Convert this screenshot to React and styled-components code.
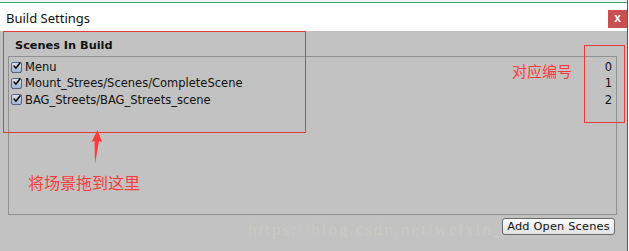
import React from 'react'
import styled, { createGlobalStyle } from 'styled-components'

const Global = createGlobalStyle`
  html, body { margin: 0; padding: 0; background: #ffffff; }
  body { width: 629px; height: 251px; overflow: hidden; }
`

const Window = styled.div`
  position: relative;
  width: 627px;
  height: 251px;
  border-right: 1px solid #4c5a6e;
  display: flex;
  flex-direction: column;
  font-family: 'DejaVu Sans', Verdana, sans-serif;
`

const TopStrip = styled.div`
  height: 2px;
  background: #f4f4f4;
  border-bottom: 1px solid #3da66a;
`

const TitleBar = styled.div`
  height: 28px;
  background: #ffffff;
  display: flex;
  align-items: center;
  justify-content: space-between;
  padding-left: 6px;
`

const Title = styled.span`
  font-family: 'Noto Sans', 'DejaVu Sans', sans-serif;
  font-size: 13px;
  color: #111;
  margin-top: 1px;
`

const CloseButton = styled.div`
  width: 19px;
  height: 18px;
  margin-top: 4px;
  background: #c75050;
  color: #fff;
  font-family: 'Liberation Sans', Arial, sans-serif;
  font-weight: bold;
  font-size: 12px;
  display: flex;
  align-items: center;
  justify-content: center;
  padding-bottom: 2px;
  box-sizing: border-box;
`

const Body = styled.div`
  flex: 1;
  background: #c2c2c2;
  padding: 7px 10px 0 8px;
  display: flex;
  flex-direction: column;
`

const Header = styled.div`
  font-weight: bold;
  font-size: 11.3px;
  color: #111;
  padding-left: 7px;
  height: 18px;
  line-height: 16px;
`

const ListBox = styled.div`
  height: 155px;
  border: 1px solid #909090;
  padding: 2px 2px 0 2px;
  display: flex;
  flex-direction: column;
`

const Row = styled.div`
  height: 16.3px;
  display: flex;
  align-items: center;
  font-size: 11.5px;
  color: #111;
`

const Check = styled.span`
  width: 11px;
  height: 11px;
  box-sizing: border-box;
  border: 1px solid #56657a;
  border-radius: 2px;
  background: linear-gradient(#d6e2f3, #9fb5d4);
  margin-right: 3px;
  display: flex;
  align-items: center;
  justify-content: center;
  flex-shrink: 0;
`

const SceneName = styled.span`
  flex: 1;
`

const Index = styled.span`
  padding-right: 2px;
`

const Footer = styled.div`
  display: flex;
  justify-content: flex-end;
  padding-top: 3px;
  padding-right: 2px;
`

const Button = styled.div`
  height: 17px;
  width: 113px;
  box-sizing: border-box;
  border: 1px solid #6a6a6a;
  border-radius: 3px;
  background: linear-gradient(#fbfbfb, #e2e2e2);
  font-size: 11.3px;
  color: #111;
  display: flex;
  align-items: center;
  justify-content: center;
  letter-spacing: 0.2px;
  position: relative;
  z-index: 2;
`

const Watermark = styled.div`
  position: absolute;
  left: 248px;
  top: 220px;
  font-family: 'Liberation Serif', serif;
  font-size: 17px;
  letter-spacing: 2px;
  color: #cac9c2;
  white-space: nowrap;
  z-index: 1;
`

const RedBox = styled.div`
  position: absolute;
  border: 1px solid #e63b3b;
  left: ${p => p.x}px;
  top: ${p => p.y}px;
  width: ${p => p.w}px;
  height: ${p => p.h}px;
  z-index: 3;
`

const Note = styled.div`
  position: absolute;
  left: ${p => p.x}px;
  top: ${p => p.y}px;
  font-family: 'Noto Sans CJK SC', sans-serif;
  font-size: ${p => p.size}px;
  color: #ff3a3a;
  white-space: nowrap;
  line-height: 1;
  z-index: 3;
`

const Arrow = styled.svg`
  position: absolute;
  left: 85px;
  top: 128px;
  z-index: 3;
`

const CheckMark = () => (
  <svg width="11" height="10" viewBox="0 0 11 10" style={{ marginTop: -2, marginLeft: 1 }}>
    <path d="M1.5 5 L4 8 L9.5 0.8" fill="none" stroke="#0b0b0b" strokeWidth="2.2" strokeLinecap="round" strokeLinejoin="round" />
  </svg>
)

const scenes = [
  'Menu',
  'Mount_Strees/Scenes/CompleteScene',
  'BAG_Streets/BAG_Streets_scene'
]

export default function App() {
  return (
    <>
      <Global />
      <Window>
        <TopStrip />
        <TitleBar>
          <Title>Build Settings</Title>
          <CloseButton>x</CloseButton>
        </TitleBar>
        <Body>
          <Header>Scenes In Build</Header>
          <ListBox>
            {scenes.map((s, i) => (
              <Row key={s}>
                <Check><CheckMark /></Check>
                <SceneName>{s}</SceneName>
                <Index>{i}</Index>
              </Row>
            ))}
          </ListBox>
          <Footer>
            <Button>Add Open Scenes</Button>
          </Footer>
        </Body>
        <Watermark>https://blog.csdn.net/weixin_40651515</Watermark>
        <RedBox x={3} y={31} w={301} h={100} />
        <RedBox x={584} y={45} w={39} h={76} />
        <Note x={512} y={63} size={15}>对应编号</Note>
        <Note x={28} y={174} size={16}>将场景拖到这里</Note>
        <Arrow width="24" height="40" viewBox="0 0 24 40">
          <polygon points="12.5,2 17,14 14,13 10,36 9.5,13 6.5,14" fill="#ff3a3a" />
        </Arrow>
      </Window>
    </>
  )
}
